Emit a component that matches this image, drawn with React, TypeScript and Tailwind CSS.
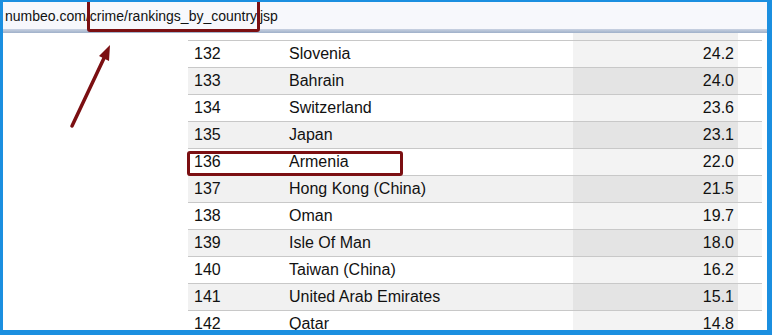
import React from "react";

const rows = [
	{ rank: 132, country: "Slovenia", value: "24.2" },
	{ rank: 133, country: "Bahrain", value: "24.0" },
	{ rank: 134, country: "Switzerland", value: "23.6" },
	{ rank: 135, country: "Japan", value: "23.1" },
	{ rank: 136, country: "Armenia", value: "22.0" },
	{ rank: 137, country: "Hong Kong (China)", value: "21.5" },
	{ rank: 138, country: "Oman", value: "19.7" },
	{ rank: 139, country: "Isle Of Man", value: "18.0" },
	{ rank: 140, country: "Taiwan (China)", value: "16.2" },
	{ rank: 141, country: "United Arab Emirates", value: "15.1" },
	{ rank: 142, country: "Qatar", value: "14.8" },
];

const Arrow = () => (
	<svg className="absolute left-0 top-0 pointer-events-none" width="764" height="328">
		<line x1="69" y1="124" x2="102" y2="54" stroke="#7b0f12" strokeWidth="3.5" strokeLinecap="round" />
		<polygon points="107,43 96,54 106,59" fill="#7b0f12" />
	</svg>
);

export default function App() {
	return (
		<div className="relative w-[772px] h-[335px] overflow-hidden bg-white border-l-[3px] border-t-[2px] border-r-[5px] border-b-[5px] border-[#1b8fe0] font-['Liberation_Sans',Arial,sans-serif] text-[#111]">
			{/* address bar */}
			<div className="h-[27px] bg-[#f7f8fc] pl-[2px] flex items-center text-[14px] pt-[2px]">
				numbeo.com/crime/rankings_by_country.jsp
			</div>
			<div className="h-[4px] bg-gradient-to-b from-[#c9d2e2] to-[#9fb0c9]"></div>

			<div className="flex">
				<div className="w-[185px] shrink-0"></div>
				<div className="w-[574px] shrink-0 text-[16px]">
					<div className="h-[7px] flex">
						<div className="w-[385px]"></div>
						<div className="w-[165px] bg-[#f0f0f0]"></div>
					</div>
					{rows.map((r, i) => {
						const odd = i % 2 === 1;
						return (
							<div
								key={r.rank}
								className={`h-[27px] flex border-t border-[#c8c8c8] ${odd ? "bg-[#f1f1f1]" : "bg-white"}`}
							>
								<div className="w-[101px] pl-[6px] flex items-center">{r.rank}</div>
								<div className="w-[284px] flex items-center">{r.country}</div>
								<div
									className={`w-[165px] pr-[4px] flex items-center justify-end ${odd ? "bg-[#e4e4e4]" : "bg-[#f3f3f3]"}`}
								>
									{r.value}
								</div>
								<div className={`w-[24px] ${odd ? "bg-[#f7f7f7]" : "bg-white"}`}></div>
							</div>
						);
					})}
				</div>
			</div>

			{/* highlight boxes */}
			<div className="absolute left-[84px] top-[-6px] w-[173px] h-[36px] border-[3px] border-[#7b0f12] rounded-[3px]"></div>
			<div className="absolute left-[184px] top-[149px] w-[216px] h-[25px] border-[3px] border-[#7b0f12] rounded-[3px]"></div>
			<Arrow />
		</div>
	);
}
